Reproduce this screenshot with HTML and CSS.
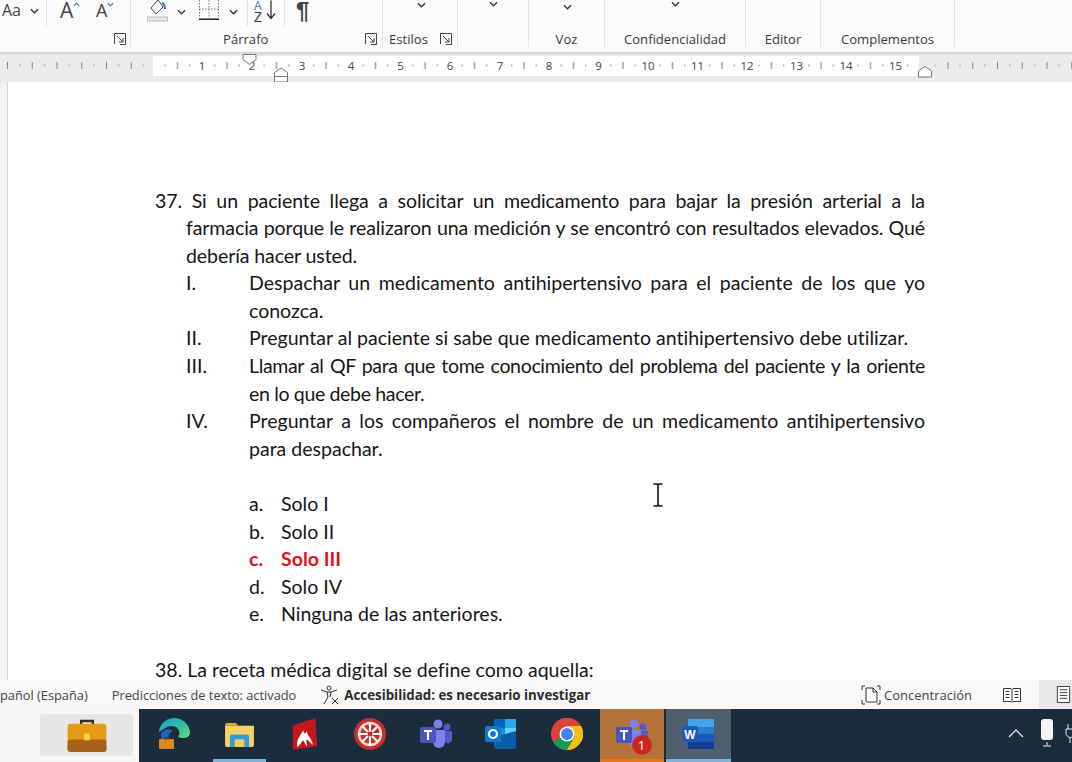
FILE: index.html
```html
<!DOCTYPE html>
<html lang="es">
<head>
<meta charset="utf-8">
<title>Documento</title>
<link rel="stylesheet" href="styles.css">
</head>
<body>
<div class="app">
  <header class="ribbon">
    <section class="group g-font">
      <div class="tools">
        <span class="aa">Aa</span>
        <svg class="chev c1" viewBox="0 0 10 6"><path d="M1 1l4 4 4-4"/></svg>
        <i class="vsep s1"></i>
        <span class="bigA">A<svg viewBox="0 0 8 5"><path d="M1 4l3-3 3 3" stroke="#2f7fc9"/></svg></span>
        <span class="bigA small">A<svg viewBox="0 0 8 5"><path d="M1 1l3 3 3-3" stroke="#2f7fc9"/></svg></span>
      </div>
      <div class="label-row end">
        <svg class="launcher" viewBox="0 0 12 12"><path d="M.5 11V.5H11.5V11.5H6M3 3l6 6M9 5v4H5"/></svg>
      </div>
    </section>
    <section class="group g-par">
      <div class="tools">
        <svg class="bucket" viewBox="0 0 22 22"><path d="M11 0L4 8l5 6 7-7z" fill="#fff" stroke="#444"/><path d="M15 3c2 1 3 3 3 6" stroke="#2f7fc9" stroke-width="2" fill="none"/><rect x=".5" y="17" width="20" height="4" fill="#e8e8e8" stroke="#bbb"/></svg>
        <svg class="chev c2" viewBox="0 0 10 6"><path d="M1 1l4 4 4-4"/></svg>
        <svg class="borders" viewBox="0 0 20 20"><path d="M.5 0v18M19.500 0v18M10 0v18M0 9h20" stroke="#777" stroke-dasharray="1.500 1.500" fill="none"/><path d="M0 19.200h20" stroke="#222" stroke-width="1.500"/></svg>
        <svg class="chev c3" viewBox="0 0 10 6"><path d="M1 1l4 4 4-4"/></svg>
        <i class="vsep s2"></i>
        <span class="sort"><b>A</b><b class="z">Z</b><svg viewBox="0 0 10 20"><path d="M5 0v18M1 13l4 5 4-5" fill="none" stroke="#333" stroke-width="1.300"/></svg></span>
        <i class="vsep s3"></i>
        <span class="pilcrow">¶</span>
      </div>
      <div class="label-row center">
        <span></span><span class="glabel">Párrafo</span>
        <svg class="launcher" viewBox="0 0 12 12"><path d="M.5 11V.5H11.5V11.5H6M3 3l6 6M9 5v4H5"/></svg>
      </div>
    </section>
    <section class="group g-est">
      <div class="tools mid t1"><svg class="chev" viewBox="0 0 10 6"><path d="M1 1l4 4 4-4"/></svg></div>
      <div class="label-row between">
        <span class="glabel">Estilos</span>
        <svg class="launcher" viewBox="0 0 12 12"><path d="M.5 11V.5H11.5V11.5H6M3 3l6 6M9 5v4H5"/></svg>
      </div>
    </section>
    <section class="group g-blank">
      <div class="tools mid t2"><svg class="chev" viewBox="0 0 10 6"><path d="M1 1l4 4 4-4"/></svg></div>
    </section>
    <section class="group g-voz">
      <div class="tools mid t3"><svg class="chev" viewBox="0 0 10 6"><path d="M1 1l4 4 4-4"/></svg></div>
      <div class="label-row plain"><span class="glabel">Voz</span></div>
    </section>
    <section class="group g-conf">
      <div class="tools mid t2"><svg class="chev" viewBox="0 0 10 6"><path d="M1 1l4 4 4-4"/></svg></div>
      <div class="label-row plain"><span class="glabel">Confidencialidad</span></div>
    </section>
    <section class="group g-edit">
      <div class="tools"></div>
      <div class="label-row plain"><span class="glabel">Editor</span></div>
    </section>
    <section class="group g-comp">
      <div class="tools"></div>
      <div class="label-row plain"><span class="glabel">Complementos</span></div>
    </section>
  </header>

  <div class="ruler">
    <svg class="ruler-svg" viewBox="0 0 1072 26" width="1072" height="26">
      <defs>
        <pattern id="tk-out" x="7" y="0" width="24.75" height="26" patternUnits="userSpaceOnUse">
          <rect x="0" y="6" width="1" height="7" fill="#888"/>
          <rect x="12.200" y="8.500" width="1" height="2" fill="#999"/>
        </pattern>
        <pattern id="tk-in" x="152.500" y="0" width="49.500" height="26" patternUnits="userSpaceOnUse">
          <rect x="12.200" y="8.500" width="1" height="2" fill="#888"/>
          <rect x="24.500" y="6" width="1" height="7" fill="#777"/>
          <rect x="36.800" y="8.500" width="1" height="2" fill="#888"/>
        </pattern>
      </defs>
      <rect x="0" y="0" width="1072" height="26" fill="#ebebeb"/>
      <rect x="153" y="0" width="766" height="20" fill="#fff"/>
      <rect x="0" y="0" width="153" height="26" fill="url(#tk-out)"/>
      <rect x="930" y="0" width="142" height="26" fill="url(#tk-out)"/>
      <rect x="153" y="0" width="766" height="20" fill="url(#tk-in)"/>
      <g class="ruler-nums">
        <text x="202" y="14">1</text><text x="252" y="14">2</text><text x="302" y="14">3</text>
        <text x="351" y="14">4</text><text x="400.500" y="14">5</text><text x="450" y="14">6</text>
        <text x="500" y="14">7</text><text x="549" y="14">8</text><text x="598.500" y="14">9</text>
        <text x="648" y="14">10</text><text x="697.500" y="14">11</text><text x="747" y="14">12</text>
        <text x="796.500" y="14">13</text><text x="846" y="14">14</text><text x="895.500" y="14">15</text>
      </g>
      <path d="M243 -1.500h13v5l-6.500 5-6.500-5z" fill="#fff" stroke="#777"/>
      <path d="M274.500 26v-9.500l6.500-4.500 6.500 4.500v9.500zM274.500 20.500h13" fill="#fff" stroke="#777"/>
      <path d="M918.500 21v-6l6.500-4.500 6.500 4.500v6z" fill="#fff" stroke="#777"/>
    </svg>
  </div>

  <main class="doc">
    <div class="page">
      <p class="q snug">37. Si un paciente llega a solicitar un medicamento para bajar la presión arterial a la farmacia porque le realizaron una medición y se encontró con resultados elevados. Qué debería hacer usted.</p>
      <div class="item"><span>I.</span><p>Despachar un medicamento antihipertensivo para el paciente de los que yo conozca.</p></div>
      <div class="item"><span>II.</span><p>Preguntar al paciente si sabe que medicamento antihipertensivo debe utilizar.</p></div>
      <div class="item"><span>III.</span><p class="tight">Llamar al QF para que tome conocimiento del problema del paciente y la oriente en lo que debe hacer.</p></div>
      <div class="item"><span>IV.</span><p>Preguntar a los compañeros el nombre de un medicamento antihipertensivo para despachar.</p></div>
      <div class="opts">
        <div class="opt"><span>a.</span><span>Solo I</span></div>
        <div class="opt"><span>b.</span><span>Solo II</span></div>
        <div class="opt right"><span>c.</span><span>Solo III</span></div>
        <div class="opt"><span>d.</span><span>Solo IV</span></div>
        <div class="opt"><span>e.</span><span>Ninguna de las anteriores.</span></div>
      </div>
      <p class="q">38. La receta médica digital se define como aquella:</p>
    </div>
    <svg class="ibeam" viewBox="0 0 11 24"><path d="M1 1h3.500l1 1 1-1H10M5.500 2v20M1 23h3.500l1-1 1 1H10" fill="none" stroke="#111" stroke-width="1.600"/></svg>
  </main>

  <footer class="status">
    <span class="st lang">pañol (España)</span>
    <span class="st pred">Predicciones de texto: activado</span>
    <svg class="acc-ic" viewBox="0 0 20 20"><circle cx="9" cy="3" r="2" fill="none" stroke="#333"/><path d="M1 5l6 2h4l6-2M7 7l1 5-4 7M11 7l-1 5M12 13l6 6M18 13l-6 6" fill="none" stroke="#333"/></svg>
    <span class="st acc">Accesibilidad: es necesario investigar</span>
    <span class="spacer"></span>
    <svg class="focus-ic" viewBox="0 0 20 20"><path d="M1 5V1h3M16 1h3v4M1 15v4h3M19 15v4h-3" fill="none" stroke="#333"/><path d="M5 3h7l4 4v10H5zM12 3v4h4" fill="#fff" stroke="#333"/></svg>
    <span class="st conc">Concentración</span>
    <svg class="read-ic" viewBox="0 0 18 16"><path d="M.5 1.500h7.500l1 1 1-1h7.500v13h-7.500l-1 1-1-1H.5zM9 2.500v12M2.500 4.500h4M2.500 7.500h4M2.500 10.500h4M11.500 4.500h4M11.500 7.500h4M11.500 10.500h4" fill="#fff" stroke="#333"/></svg>
    <span class="print-box"><svg viewBox="0 0 14 18"><path d="M.5.500h13v17H.5zM3 4h8M3 7h8M3 10h8M3 13h8" fill="#fff" stroke="#333"/></svg></span>
  </footer>

  <nav class="taskbar">
    <div class="tb-start"><div class="tb-case">
      <svg class="ic" viewBox="0 0 40 34"><path d="M14 6V2h12v4" fill="none" stroke="#3c2a1c" stroke-width="2.500"/><rect y="5" width="40" height="29" rx="3" fill="#e69a1a"/><rect y="21" width="40" height="13" rx="3" fill="#a8601a"/><rect x="17" y="15" width="6" height="7" fill="#f7d23a"/></svg>
    </div></div>
    <div class="tb-apps">
      <div class="cell"><svg class="ic" viewBox="0 0 32 32"><defs><linearGradient id="ed" x1="0" y1="0" x2="1" y2="1"><stop offset="0" stop-color="#1f9cd8"/><stop offset=".6" stop-color="#35c1a0"/><stop offset="1" stop-color="#6fdc6a"/></linearGradient></defs><path d="M1 14C2 5 9 0 16 0c9 0 16 7 16 15 0 3-3 5-7 5-3 0-5-1-5-2 2-1 2-4 0-7-2-3-7-4-11-2-4 2-6 4-8 5z" fill="url(#ed)"/><path d="M3 15c3-4 8-5 12-2-3 1-5 4-5 8 0 4 3 7 8 9 -9 2-16-6-15-15z" fill="#1668b8"/><rect x="1" y="21" width="15" height="10" rx="1" fill="#d98a1c"/><rect x="6" y="19" width="5" height="2.500" fill="#444"/></svg></div>
      <div class="cell on-blue"><svg class="ic folder" viewBox="0 0 30 26"><path d="M0 3a2 2 0 012-2h9l3 3h-14z" fill="#e8a92c"/><path d="M0 4h30v20a2 2 0 01-2 2H2a2 2 0 01-2-2z" fill="#f9d262"/><path d="M7 13h16a2 2 0 012 2v11H5V15a2 2 0 012-2z" fill="#2f9be0"/><rect x="10" y="18" width="10" height="8" fill="#f5cc55"/></svg></div>
      <div class="cell"><svg class="ic" viewBox="0 0 26 34"><path d="M0 8L24 0l2 30-26 4z" fill="#c4161c"/><path d="M5 31c-2-6 2-11 6-18 1 4 2 4 4 1 0 5 7 9 6 15-3-4-5-6-6-6-2 1 1 4 0 7-3-3-3-6-4-6-2 1-2 4-6 7z" fill="#fff"/></svg></div>
      <div class="cell"><svg class="ic" viewBox="0 0 32 32"><circle cx="16" cy="16" r="16" fill="#c4302e"/><circle cx="16" cy="16" r="11" fill="none" stroke="#f3d8d4" stroke-width="2.500"/><path d="M16 4v24M4 16h24M9 9l5 5M23 9l-5 5M9 23l5-5M23 23l-5-5" stroke="#fff" stroke-width="2.200"/><circle cx="16" cy="16" r="2.500" fill="#c4302e"/></svg></div>
      <div class="cell"><svg class="ic" viewBox="0 0 32 30"><circle cx="18" cy="5" r="4.500" fill="#7b83eb"/><circle cx="27" cy="8" r="3.500" fill="#5059c9"/><path d="M13 11h12v12a6 6 0 01-12 0z" fill="#7b83eb"/><path d="M25 12h7v9a4 4 0 01-7 2z" fill="#5059c9"/><rect y="8" width="16" height="16" rx="2" fill="#4b53bc"/><path d="M4 12h8M8 12v9" stroke="#fff" stroke-width="2.200"/></svg></div>
      <div class="cell"><svg class="ic" viewBox="0 0 32 30"><rect x="9" y="0" width="22" height="28" rx="2" fill="#1490df"/><rect x="9" y="0" width="11" height="9" fill="#0364b8"/><rect x="20" y="0" width="11" height="9" fill="#28a8ea"/><rect x="20" y="9" width="11" height="9" fill="#50d9ff"/><path d="M9 18l22-6v16a2 2 0 01-2 2H11a2 2 0 01-2-2z" fill="#0a5ea8"/><rect y="7" width="16" height="16" rx="2" fill="#0f78d4"/><circle cx="8" cy="15" r="4" fill="none" stroke="#fff" stroke-width="2.200"/></svg></div>
      <div class="cell"><svg class="ic" viewBox="0 0 32 32"><circle cx="16" cy="16" r="16" fill="#db4437"/><path d="M16 16L2 24A16 16 0 0016 32l8-14z" fill="#0f9d58"/><path d="M16 8h14a16 16 0 01-14 24l8-14z" fill="#f4c20d"/><path d="M16 8h14A16 16 0 002.100 8L8 18z" fill="#db4437"/><circle cx="16" cy="16" r="7.500" fill="#fff"/><circle cx="16" cy="16" r="6" fill="#4285f4"/></svg></div>
      <div class="cell active-teams"><span class="teams-wrap"><svg class="ic" viewBox="0 0 32 30"><circle cx="18" cy="5" r="4.500" fill="#7b83eb"/><circle cx="27" cy="8" r="3.500" fill="#5059c9"/><path d="M13 11h12v12a6 6 0 01-12 0z" fill="#7b83eb"/><path d="M25 12h7v9a4 4 0 01-7 2z" fill="#5059c9"/><rect y="8" width="16" height="16" rx="2" fill="#4b53bc"/><path d="M4 12h8M8 12v9" stroke="#fff" stroke-width="2.200"/></svg><b class="badge">1</b></span></div>
      <div class="cell active-word"><svg class="ic" viewBox="0 0 32 30"><rect x="6" y="0" width="26" height="30" rx="2" fill="#2b7cd3"/><rect x="6" y="0" width="26" height="8" fill="#41a5ee"/><rect x="6" y="15" width="26" height="8" fill="#185abd"/><rect x="6" y="23" width="26" height="7" fill="#103f91"/><rect y="7" width="16" height="16" rx="2" fill="#185abd"/><text x="8" y="19.500" class="w">W</text></svg></div>
    </div>
    <div class="tray">
      <svg class="caret" viewBox="0 0 16 9"><path d="M1 8l7-7 7 7" fill="none" stroke="#dfe5ea" stroke-width="1.300"/></svg>
      <svg class="mic" viewBox="0 0 14 28"><rect x="1" y="0" width="12" height="21" rx="3" fill="#f2f4f6"/><path d="M7 23v3M3 27h8" stroke="#f2f4f6"/></svg>
      <svg class="plug" viewBox="0 0 10 20"><path d="M3 1v5M8 1v5M1 6h9v4a4 4 0 01-9 0zM5 14v6" fill="none" stroke="#dfe5ea"/></svg>
    </div>
  </nav>
</div>
</body>
</html>
```

FILE: styles.css
```css
* { box-sizing: border-box; }
html, body { margin: 0; padding: 0; }
body { width: 1072px; height: 762px; overflow: hidden; background: #fff; }
.app { display: flex; flex-direction: column; width: 1072px; height: 762px; overflow: hidden; font-family: "Open Sans", "Liberation Sans", sans-serif; color: #333; }

/* Ribbon */
.ribbon { display: flex; height: 52px; flex: none; background: #fbfbfb; }
.group { height: 47px; border-right: 1px solid #e2e2e2; display: flex; flex-direction: column; flex: none; }
.g-font { width: 131px; }
.g-par { width: 252px; }
.g-est { width: 75px; }
.g-blank { width: 71px; }
.g-voz { width: 76px; }
.g-conf { width: 141px; }
.g-edit { width: 75px; }
.g-comp { width: 134px; }
.tools { height: 31px; flex: none; display: flex; align-items: flex-start; position: relative; }
.tools.mid { justify-content: center; }
.t1 { padding-top: 2px; padding-left: 2px; }
.t2 { padding-top: 1px; }
.t3 { padding-top: 4px; padding-left: 1px; }
.label-row { flex: 1; display: flex; align-items: center; padding-bottom: 1px; }
.label-row.end { justify-content: flex-end; padding-right: 4px; }
.label-row.center { display: grid; grid-template-columns: 92px auto 1fr; padding-right: 5px; }
.label-row.center .launcher { justify-self: end; }
.label-row.between { justify-content: space-between; padding: 0 5px 1px 6px; }
.label-row.plain { justify-content: center; }
.glabel { font-size: 13.100px; color: #3a3a3a; line-height: 16px; }
.launcher { width: 12px; height: 12px; fill: none; stroke: #444; stroke-width: 1; }
.chev { width: 9px; height: 6px; fill: none; stroke: #333; stroke-width: 1.400; flex: none; }
.vsep { display: block; width: 1px; height: 26px; background: #e2e2e2; flex: none; }
.aa { font-size: 16px; line-height: 20px; margin-left: 2px; color: #444; }
.c1 { margin: 8px 0 0 9px; }
.s1 { margin-left: 7px; }
.bigA { font-size: 21px; line-height: 24px; margin-left: 13px; color: #444; display: flex; width: 26px; margin-top: -2px; }
.bigA svg { width: 7px; height: 5px; fill: none; stroke-width: 1.400; margin-top: 4px; }
.bigA.small { font-size: 18px; margin-left: 10px; margin-top: -2px; }
.bucket { width: 22px; height: 22px; margin-left: 16px; flex: none; }
.c2 { margin: 9px 0 0 8px; }
.borders { width: 20px; height: 20px; margin-left: 13px; flex: none; }
.c3 { margin: 9px 0 0 10px; }
.s2 { margin-left: 9px; }
.sort { width: 24px; height: 24px; margin-left: 6px; display: grid; grid-template-columns: 12px 10px; grid-template-rows: 11px 12px; font-size: 12px; line-height: 11px; }
.sort b { font-weight: 400; color: #2f7fc9; grid-column: 1; }
.sort b.z { color: #333; grid-row: 2; font-size: 14px; line-height: 12px; }
.sort svg { grid-column: 2; grid-row: 1 / span 2; width: 10px; height: 21px; }
.s3 { margin-left: 6px; }
.pilcrow { font-size: 24px; line-height: 22px; margin-left: 11px; font-weight: 700; color: #444; font-family: "Liberation Sans", sans-serif; }

/* Ruler */
.ruler { height: 30px; flex: none; background: linear-gradient(#cfcfcf, #ededed 4px); padding-top: 4px; }
.ruler-svg { display: block; overflow: visible; }
.ruler-nums text { font-family: "Open Sans", sans-serif; font-size: 11.500px; fill: #444; text-anchor: middle; }

/* Document */
.doc { height: 598px; flex: none; position: relative; overflow: hidden; padding-left: 7px; background: #f3f3f3; }
.page { height: 100%; background: #fff; border-left: 1px solid #d4d4d4; padding: 104.500px 147px 0 147px; font-family: "Lato", "Liberation Sans", sans-serif; font-size: 19.550px; line-height: 27.600px; color: #161616; overflow: hidden; font-variant-ligatures: none; }
.page p { margin: 0; }
.q { padding-left: 31px; text-indent: -31px; text-align: justify; }
.page p.snug { letter-spacing: -.09px; }
.item { display: grid; grid-template-columns: 63px 1fr; padding-left: 31px; }
.item p { text-align: justify; }
.item p.tight { letter-spacing: -.35px; }
.opts { padding: 27.600px 0 27.600px 94px; }
.opt { display: grid; grid-template-columns: 32px 1fr; }
.opt.right { color: #e3101f; font-weight: 700; }
.ibeam { position: absolute; left: 652px; top: 401px; width: 12px; height: 24px; }

/* Status bar */
.status { height: 29px; flex: none; background: #f8f8f8; display: flex; align-items: center; font-size: 12.800px; color: #444; }
.pred { margin-left: 24px; }
.acc-ic { width: 20px; height: 20px; margin-left: 24px; flex: none; }
.acc { margin-left: 4px; font-weight: 700; color: #2c2c2c; font-size: 13.300px; }
.spacer { flex: 1; }
.focus-ic { width: 20px; height: 20px; flex: none; }
.conc { margin-left: 3px; font-size: 13px; }
.read-ic { width: 18px; height: 16px; margin-left: 31px; flex: none; }
.print-box { width: 33px; height: 29px; margin-left: 18px; background: #e8e8e8; padding: 6px 0 0 17px; }
.print-box svg { display: block; width: 15px; height: 17px; }

/* Taskbar */
.taskbar { height: 53px; flex: none; display: flex; background: #1b2c3d; }
.tb-start { width: 139px; flex: none; background: #f6f6f6; padding: 5px 6px 6px 40px; }
.tb-case { height: 42px; background: #e7e7e7; border-radius: 3px; display: flex; align-items: center; justify-content: center; }
.tb-case .ic { width: 40px; height: 33px; }
.tb-apps { display: grid; grid-template-columns: repeat(9, 65.500px); padding-left: 2px; flex: none; }
.cell { display: flex; align-items: center; justify-content: center; padding-bottom: 3px; position: relative; }
.ic { width: 32px; height: 32px; display: block; }
.ic.folder { width: 29px; height: 25px; }
.on-blue::after { content: ""; position: absolute; left: 6px; right: 6px; bottom: 0; height: 3px; background: #7fb4dc; }
.active-teams { background: #b5733a; box-shadow: inset 0 -3px 0 #e8771e; margin-right: 1.500px; }
.active-word { background: #4f5f6e; box-shadow: inset 0 -3px 0 #7fb4dc; margin-left: .5px; }
.teams-wrap { position: relative; display: block; }
.badge { position: absolute; right: -4px; bottom: -5px; width: 20px; height: 20px; border-radius: 50%; background: #c9281f; color: #fff; font-size: 13px; line-height: 20px; font-weight: 400; text-align: center; }
.w { font-family: "Liberation Sans", sans-serif; font-weight: 700; font-size: 12px; fill: #fff; text-anchor: middle; }
.tray { flex: 1; display: flex; align-items: center; padding: 0 0 5px 277px; min-width: 0; overflow: hidden; }
.caret { width: 16px; height: 9px; flex: none; }
.mic { width: 14px; height: 28px; margin-left: 16px; flex: none; }
.plug { width: 10px; height: 20px; margin-left: 11px; flex: none; }
```
